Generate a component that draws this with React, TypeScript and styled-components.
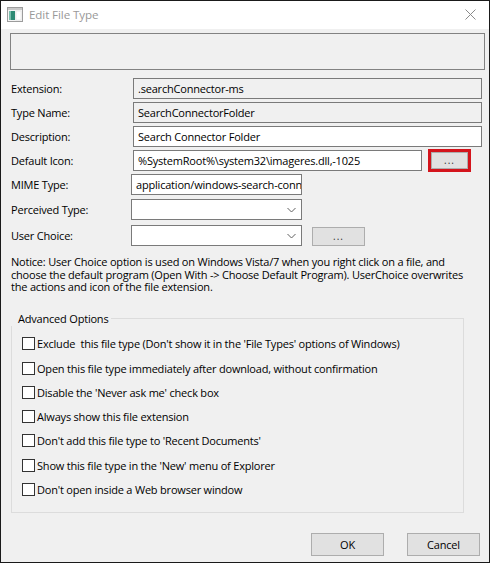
import React from "react";
import styled, { createGlobalStyle } from "styled-components";

const GlobalStyle = createGlobalStyle`
  html, body {
    margin: 0;
    padding: 0;
    background: #f0f0f0;
  }
  * { box-sizing: border-box; }
`;

const font = `"Open Sans", "Noto Sans", "Liberation Sans", sans-serif`;

const Window = styled.div`
  width: 490px;
  height: 563px;
  border: 1px solid #1a1a1a;
  background: #f0f0f0;
  display: flex;
  flex-direction: column;
  font-family: ${font};
  font-size: 11px;
  letter-spacing: -0.2px;
  color: #000;
  overflow: hidden;
`;

const TitleBar = styled.div`
  height: 28px;
  flex: none;
  background: #fff;
  display: flex;
  align-items: center;
  padding: 0 0 1px 6px;
`;

const TitleText = styled.span`
  margin-left: 6px;
  font-size: 11.6px;
  letter-spacing: -0.1px;
  color: #999;
`;

const CloseButton = styled.div`
  margin-left: auto;
  width: 38px;
  height: 28px;
  display: flex;
  align-items: center;
  justify-content: center;
`;

const Body = styled.div`
  flex: 1;
  display: flex;
  flex-direction: column;
  padding: 4px 5px 0 9px;
`;

const Banner = styled.div`
  height: 37px;
  width: 475px;
  border: 1px solid #828282;
  background: #f0f0f0;
`;

const Row = styled.div<{ $top: number }>`
  display: flex;
  align-items: center;
  margin-top: ${(p) => p.$top}px;
  height: 21px;
`;

const Label = styled.div`
  width: 121px;
  padding-left: 1px;
  flex: none;
`;

const Field = styled.div<{ $width: number; $shift?: number; $readOnly?: boolean }>`
  width: ${(p) => p.$width}px;
  height: 21px;
  margin-left: ${(p) => p.$shift ?? 0}px;
  border: 1px solid #7a7a7a;
  background: ${(p) => (p.$readOnly ? "#f0f0f0" : "#fff")};
  display: flex;
  align-items: center;
  padding-left: 4px;
  white-space: nowrap;
  overflow: hidden;
`;

const Combo = styled.div`
  width: 171px;
  height: 21px;
  border: 1px solid #7a7a7a;
  background: #fff;
  display: flex;
  align-items: center;
  justify-content: flex-end;
  padding-right: 5px;
`;

const HighlightRing = styled.div`
  margin-left: 6px;
  width: 43px;
  height: 23px;
  border: 3px solid #d4141c;
  display: flex;
`;

const Button = styled.div<{ $w?: number; $h?: number }>`
  width: ${(p) => (p.$w ? `${p.$w}px` : "100%")};
  height: ${(p) => (p.$h ? `${p.$h}px` : "100%")};
  background: #e1e1e1;
  border: 1px solid #adadad;
  display: flex;
  align-items: center;
  justify-content: center;
  color: #000;
`;

const Dots = styled.span`
  font-size: 10px;
  letter-spacing: 1px;
  color: #333;
  margin-top: -2px;
`;

const SideButton = styled(Button)`
  margin-left: 10px;
  align-self: flex-end;
`;

const Notice = styled.p`
  margin: 10px 0 0 1px;
  line-height: 12.6px;
  width: 470px;
`;

const Group = styled.fieldset`
  margin: 18px 0 0 1px;
  width: 453px;
  height: 201px;
  border: 1px solid #dcdcdc;
  padding: 0 0 0 10px;
  display: flex;
  flex-direction: column;
`;

const Legend = styled.legend`
  padding: 0 3px 0 7px;
  margin-left: -11px;
  line-height: 14px;
`;

const CheckRow = styled.label<{ $top: number }>`
  display: flex;
  align-items: center;
  height: 14px;
  margin-top: ${(p) => p.$top}px;
  white-space: pre;
`;

const Box = styled.span`
  width: 13px;
  height: 13px;
  border: 1px solid #333;
  background: #fff;
  flex: none;
  margin-right: 2px;
`;

const Footer = styled.div`
  display: flex;
  justify-content: flex-end;
  gap: 23px;
  margin-top: 20px;
  padding-right: 4px;
`;

const WindowIcon = () => (
  <svg width="16" height="15" viewBox="0 0 16 15">
    <rect x="0.5" y="0.5" width="15" height="14" fill="#f4f4f4" stroke="#9c9c9c" />
    <rect x="1" y="1" width="14" height="2" fill="#c9c9c9" />
    <rect x="2" y="4" width="6" height="9" fill="#2e8a74" />
    <rect x="2" y="4" width="2" height="9" fill="#7bbfae" />
    <rect x="9" y="4" width="5" height="9" fill="#ffffff" stroke="#d8d8d8" strokeWidth="0.5" />
  </svg>
);

const CloseGlyph = () => (
  <svg width="11" height="11" viewBox="0 0 11 11">
    <path d="M0.5 0.5 L10.5 10.5 M10.5 0.5 L0.5 10.5" stroke="#8a8a8a" strokeWidth="1" fill="none" />
  </svg>
);

const Chevron = () => (
  <svg width="9" height="6" viewBox="0 0 9 6">
    <path d="M0.5 1 L4.5 5 L8.5 1" stroke="#606060" strokeWidth="1" fill="none" />
  </svg>
);

const options = [
  { text: "Exclude  this file type (Don't show it in the 'File Types' options of Windows)", top: 11 },
  { text: "Open this file type immediately after download, without confirmation", top: 11 },
  { text: "Disable the 'Never ask me' check box", top: 10 },
  { text: "Always show this file extension", top: 10 },
  { text: "Don't add this file type to 'Recent Documents'", top: 10 },
  { text: "Show this file type in the 'New' menu of Explorer", top: 11 },
  { text: "Don't open inside a Web browser window", top: 10 },
];

export default function App() {
  return (
    <>
      <GlobalStyle />
      <Window>
        <TitleBar>
          <WindowIcon />
          <TitleText>Edit File Type</TitleText>
          <CloseButton>
            <CloseGlyph />
          </CloseButton>
        </TitleBar>
        <Body>
          <Banner />
          <Row $top={8}>
            <Label>Extension:</Label>
            <Field $width={349} $shift={2} $readOnly>.searchConnector-ms</Field>
          </Row>
          <Row $top={3}>
            <Label>Type Name:</Label>
            <Field $width={349} $shift={2} $readOnly>SearchConnectorFolder</Field>
          </Row>
          <Row $top={3}>
            <Label>Description:</Label>
            <Field $width={349} $shift={2}>Search Connector Folder</Field>
          </Row>
          <Row $top={3}>
            <Label>Default Icon:</Label>
            <Field $width={289} $shift={2}>%SystemRoot%\system32\imageres.dll,-1025</Field>
            <HighlightRing>
              <Button>
                <Dots>...</Dots>
              </Button>
            </HighlightRing>
          </Row>
          <Row $top={3}>
            <Label>MIME Type:</Label>
            <Field $width={171}>application/windows-search-conne</Field>
          </Row>
          <Row $top={4}>
            <Label>Perceived Type:</Label>
            <Combo>
              <Chevron />
            </Combo>
          </Row>
          <Row $top={5}>
            <Label>User Choice:</Label>
            <Combo>
              <Chevron />
            </Combo>
            <SideButton $w={53} $h={19}>
              <Dots>...</Dots>
            </SideButton>
          </Row>
          <Notice>
            Notice: User Choice option is used on Windows Vista/7 when you right click on a file, and
            choose the default program (Open With -&gt; Choose Default Program). UserChoice overwrites
            the actions and icon of the file extension.
          </Notice>
          <Group>
            <Legend>Advanced Options</Legend>
            {options.map((o) => (
              <CheckRow key={o.text} $top={o.top}>
                <Box />
                {o.text}
              </CheckRow>
            ))}
          </Group>
          <Footer>
            <Button $w={73} $h={23}>OK</Button>
            <Button $w={73} $h={23}>Cancel</Button>
          </Footer>
        </Body>
      </Window>
    </>
  );
}
